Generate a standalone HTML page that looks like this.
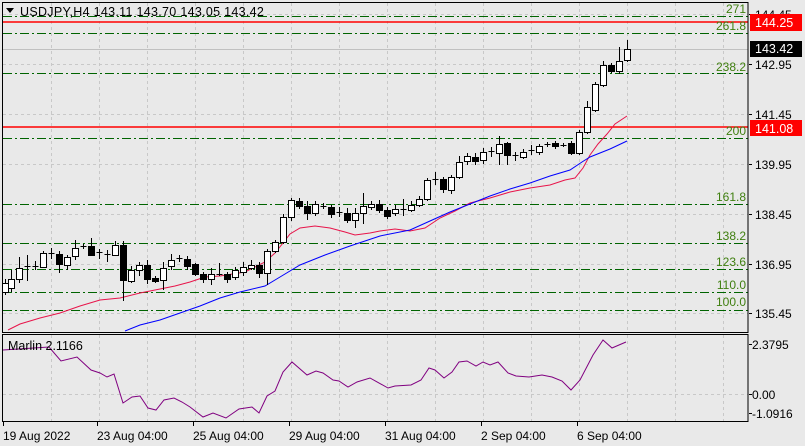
<!DOCTYPE html>
<html><head><meta charset="utf-8"><style>
html,body{margin:0;padding:0;background:#e9e9e9;width:805px;height:446px;overflow:hidden}
svg{display:block}
text{font-family:"Liberation Sans",sans-serif;font-size:12px}
</style></head><body>
<svg id="s" width="805" height="446" xmlns="http://www.w3.org/2000/svg">
<rect width="805" height="446" fill="#e9e9e9"/>
<g id="grid" stroke="#c8c8c8" stroke-dasharray="3,3" stroke-width="1"></g>
<line x1="3" y1="49.5" x2="748" y2="49.5" stroke="#c0c0c0"/>
<g id="fib" stroke="#006400" stroke-width="1" stroke-dasharray="9,3,2,3" fill="none" shape-rendering="crispEdges"></g>
<line x1="3" y1="22" x2="748" y2="22" stroke="#ff0000" stroke-width="1.5"/>
<line x1="3" y1="127" x2="748" y2="127" stroke="#ff0000" stroke-width="1.5"/>
<g id="fibt" fill="#3f7f0f" text-anchor="end" style="font-size:12.5px"></g>
<polyline id="red" fill="none" stroke="#e8144a" stroke-width="1"/>
<polyline id="blue" fill="none" stroke="#0000ff" stroke-width="1"/>
<g id="candles" stroke="#000" stroke-width="1"></g>
<polyline id="purple" fill="none" stroke="#800080" stroke-width="1"/>
<rect x="2.5" y="2.5" width="745.5" height="330" fill="none" stroke="#000"/>
<rect x="2.5" y="334.5" width="745.5" height="87" fill="none" stroke="#000"/>
<g id="ticks" stroke="#000"></g>
<g fill="#000" style="font-size:12.5px">
<text x="755" y="19">144.45</text>
<text x="755" y="69">142.95</text>
<text x="755" y="119">141.45</text>
<text x="755" y="169">139.95</text>
<text x="755" y="219">138.45</text>
<text x="755" y="269">136.95</text>
<text x="755" y="318">135.45</text>
<text x="752" y="349">2.3795</text>
<text x="752" y="399">0.00</text>
<text x="752" y="418">-1.0916</text>
</g>
<rect x="750" y="14" width="52" height="17" fill="#ff0000"/>
<text x="755" y="27" fill="#fff" style="font-size:12.5px">144.25</text>
<rect x="750" y="41" width="52" height="16" fill="#000"/>
<text x="755" y="53" fill="#fff" style="font-size:12.5px">143.42</text>
<rect x="750" y="120" width="52" height="16" fill="#ff0000"/>
<text x="755" y="133" fill="#fff" style="font-size:12.5px">141.08</text>
<polygon points="6,8 14,8 10,13" fill="#000"/>
<text x="20" y="16" fill="#000" style="font-size:12.5px;letter-spacing:0.3px">USDJPY,H4  143.11 143.70 143.05 143.42</text>
<text x="8" y="350" fill="#000" style="font-size:12.5px">Marlin 2.1166</text>
<g fill="#000" style="font-size:12.5px">
<text x="3" y="440">19 Aug 2022</text>
<text x="97" y="440">23 Aug 04:00</text>
<text x="193" y="440">25 Aug 04:00</text>
<text x="289" y="440">29 Aug 04:00</text>
<text x="385" y="440">31 Aug 04:00</text>
<text x="481" y="440">2 Sep 04:00</text>
<text x="577" y="440">6 Sep 04:00</text>
</g>
</svg>
<script>
var NS="http://www.w3.org/2000/svg";
function el(p,t,a){var e=document.createElementNS(NS,t);for(var k in a)e.setAttribute(k,a[k]);document.getElementById(p).appendChild(e);return e;}
for(var x=51;x<748;x+=48){el("grid","line",{x1:x+.5,y1:3,x2:x+.5,y2:332});el("grid","line",{x1:x+.5,y1:335,x2:x+.5,y2:421});}
[14,64,114,164,214,264,313].forEach(function(y){el("grid","line",{x1:3,y1:y+.5,x2:748,y2:y+.5})});
el("grid","line",{x1:3,y1:394.5,x2:748,y2:394.5});
var fibs=[[16,"271",13],[33,"261.8",30],[73,"238.2",71],[138,"200",135],[204,"161.8",201],[243,"138.2",240],[269,"123.6",266],[292,"110.0",289],[310,"100.0",306]];
fibs.forEach(function(f){el("fib","line",{x1:3,y1:f[0]+.5,x2:748,y2:f[0]+.5});var t=el("fibt","text",{x:746,y:f[2]});t.textContent=f[1];});
[[749,14],[749,64],[749,114],[749,164],[749,214],[749,264],[749,313],[749,344],[749,394],[749,413]].forEach(function(p){el("ticks","line",{x1:p[0],y1:p[1]+.5,x2:p[0]+3,y2:p[1]+.5})});
[3,97,193,289,385,481,577].forEach(function(x){el("ticks","line",{x1:x+.5,y1:422,x2:x+.5,y2:426})});
document.getElementById("red").setAttribute("points","8,330 20,324 40,318 60,313 80,306 100,300 120,298 140,293 160,289 175,286 190,282 205,277 220,276 245,272 265,262 275,253 283,243 290,234 300,228 315,226 330,228 345,232 355,235 370,233 380,231 395,229 410,231 425,228 440,218 455,211 470,203 490,198 510,192 530,188 550,185 565,180 575,178 583,168 590,155 598,144 607,134 615,124 627,116");
document.getElementById("blue").setAttribute("points","125,331 140,325 160,320 180,313 200,306 220,298 240,292 265,286 280,277 300,265 325,255 350,246 380,236 410,230 430,221 450,212 470,204 490,196 510,189 530,183 550,176 570,170 582,162 590,157 610,149 627,141");
document.getElementById("purple").setAttribute("points","3,350 49,347 61,361 77,357 91,370 100,373 107,377 114,374 123,403 132,397 140,396 148,408 156,410 164,400 174,398 182,402 190,407 203,417 213,413 226,418 239,409 252,407 259,413 267,396 275,391 283,372 292,362 307,375 316,371 323,373 333,380 339,381 348,387 357,382 370,378 388,388 395,386 411,385 421,380 429,368 435,370 444,378 452,372 459,362 467,361 476,366 483,362 490,365 498,362 508,373 516,376 529,377 542,375 552,377 562,381 571,390 580,380 593,355 603,340 612,348 626,342");
var C=[[5,283,292,279,295,"w"],[11,279,288,270,292,"w"],[19,268,279,257,283,"w"],[27,266,266,255,281,"d"],[35,266,266,261,270,"d"],[43,253,267,251,268,"w"],[51,253,253,248,259,"d"],[59,254,264,251,273,"b"],[67,257,265,255,270,"w"],[75,248,256,240,260,"w"],[83,246,246,244,249,"d"],[91,246,255,238,256,"b"],[99,252,252,249,259,"d"],[107,254,254,250,262,"d"],[115,245,255,241,256,"w"],[123,245,280,241,301,"b"],[131,270,281,266,283,"w"],[139,265,270,262,276,"w"],[147,265,279,260,284,"b"],[155,278,281,276,283,"b"],[163,268,280,262,290,"w"],[171,260,266,254,270,"w"],[179,258,258,255,262,"d"],[187,259,266,256,270,"b"],[195,264,274,263,276,"b"],[203,274,279,272,283,"b"],[211,274,279,268,285,"w"],[219,274,274,263,276,"d"],[227,274,279,272,283,"b"],[235,270,277,267,280,"w"],[243,267,272,262,276,"w"],[251,265,268,260,270,"w"],[259,265,273,262,278,"b"],[267,251,273,249,285,"w"],[275,242,251,240,253,"w"],[283,217,242,214,244,"w"],[291,200,217,198,221,"w"],[299,201,206,198,209,"b"],[307,206,213,201,220,"b"],[315,204,213,201,216,"w"],[323,206,206,203,209,"d"],[331,207,214,205,218,"b"],[339,212,212,207,217,"d"],[347,213,220,208,223,"b"],[355,213,220,208,228,"w"],[363,206,213,193,224,"w"],[371,204,207,201,210,"w"],[379,204,210,200,213,"b"],[387,210,216,207,219,"b"],[395,209,213,205,216,"w"],[403,209,209,199,216,"d"],[411,205,210,201,212,"w"],[419,199,205,196,207,"w"],[427,180,199,178,201,"w"],[435,179,179,172,185,"d"],[443,179,189,177,193,"b"],[451,177,190,175,194,"w"],[459,162,177,156,179,"w"],[467,156,161,153,165,"w"],[475,157,161,153,165,"b"],[483,152,160,148,164,"w"],[491,151,151,147,157,"d"],[499,144,153,136,165,"w"],[507,143,155,142,165,"b"],[515,155,155,152,161,"d"],[523,152,157,149,159,"w"],[531,150,150,145,155,"d"],[539,146,152,144,155,"w"],[547,144,144,142,147,"d"],[555,143,146,141,149,"b"],[563,145,145,143,147,"d"],[571,143,153,141,155,"b"],[579,132,153,130,155,"w"],[587,107,132,101,134,"w"],[595,84,110,82,112,"w"],[603,65,85,61,87,"w"],[611,65,71,63,73,"b"],[619,61,71,47,74,"w"],[627,49,60,40,62,"w"]];
C.forEach(function(c){var x=c[0]+.5;el("candles","line",{x1:x,y1:c[3],x2:x,y2:c[4]});
if(c[5]=="d"){el("candles","line",{x1:x-3,y1:c[1]+.5,x2:x+3,y2:c[1]+.5});}
else{el("candles","rect",{x:x-3,y:c[1]+.5,width:6,height:Math.max(1,c[2]-c[1]),fill:c[5]=="w"?"#fff":"#000"});}});
</script>
</body></html>
